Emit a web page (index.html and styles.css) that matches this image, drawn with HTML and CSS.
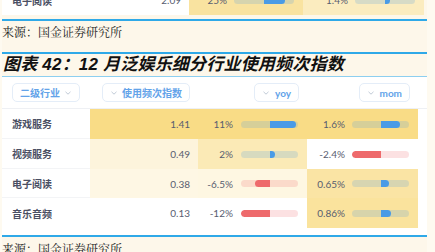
FILE: index.html
```html
<!DOCTYPE html>
<html lang="zh-CN">
<head>
<meta charset="utf-8">
<title>图表 42</title>
<link rel="stylesheet" href="styles.css">
</head>
<body>
<div class="page">
  <div class="prev">
    <div class="plabel">电子阅读</div>
    <div class="pvalue num">2.09</div>
    <div class="pbarcell pyoy">
      <span class="num">25%</span>
      <span class="bar wide"><span class="half neg"></span><span class="half pos"><i class="fill pos" style="width:21px"></i></span></span>
    </div>
    <div class="pbarcell pmom">
      <span class="num">1.4%</span>
      <span class="bar wide"><span class="half neg"></span><span class="half pos"><i class="fill pos" style="width:5px"></i></span></span>
    </div>
    <div class="pend"></div>
  </div>

  <div class="rule"></div>
  <p class="source">来源：国金证券研究所</p>
  <div class="rule"></div>
  <h2 class="title">图表 42：12 月泛娱乐细分行业使用频次指数</h2>
  <div class="rule thin"></div>

  <div class="table">
    <div class="cell head hlabel"><span class="btn">二级行业 <svg class="chev" viewBox="0 0 6 4"><polyline points="0.5,0.8 3,3.2 5.5,0.8"/></svg></span></div>
    <div class="cell head hvalue"><span class="btn"><svg class="chev" viewBox="0 0 6 4"><polyline points="0.5,0.8 3,3.2 5.5,0.8"/></svg> 使用频次指数</span></div>
    <div class="cell head hbar"><span class="btn"><svg class="chev" viewBox="0 0 6 4"><polyline points="0.5,0.8 3,3.2 5.5,0.8"/></svg> yoy</span></div>
    <div class="cell head hbar"><span class="btn"><svg class="chev" viewBox="0 0 6 4"><polyline points="0.5,0.8 3,3.2 5.5,0.8"/></svg> mom</span></div>
    <div class="cell head"></div>

    <div class="cell label">游戏服务</div>
    <div class="cell value num" style="background:#f9dc86">1.41</div>
    <div class="cell barcell" style="background:#f9dc86"><span class="num">11%</span><span class="bar"><span class="half neg"></span><span class="half pos"><i class="fill pos" style="width:26px"></i></span></span></div>
    <div class="cell barcell" style="background:#f9dc86"><span class="num">1.6%</span><span class="bar"><span class="half neg"></span><span class="half pos"><i class="fill pos" style="width:19px"></i></span></span></div>
    <div class="cell"></div>

    <div class="cell label">视频服务</div>
    <div class="cell value num" style="background:#fdf4dc">0.49</div>
    <div class="cell barcell" style="background:#fbeab6"><span class="num">2%</span><span class="bar"><span class="half neg"></span><span class="half pos"><i class="fill pos" style="width:5px"></i></span></span></div>
    <div class="cell barcell" style="background:#ffffff"><span class="num">-2.4%</span><span class="bar negbar"><span class="half neg"><i class="fill neg" style="width:28.5px"></i></span><span class="half pos"></span></span></div>
    <div class="cell"></div>

    <div class="cell label">电子阅读</div>
    <div class="cell value num" style="background:#fef7e4">0.38</div>
    <div class="cell barcell" style="background:#fef7e2"><span class="num">-6.5%</span><span class="bar negbar"><span class="half neg"><i class="fill neg" style="width:15px"></i></span><span class="half pos"></span></span></div>
    <div class="cell barcell" style="background:#fae4a4"><span class="num">0.65%</span><span class="bar"><span class="half neg"></span><span class="half pos"><i class="fill pos" style="width:8px"></i></span></span></div>
    <div class="cell"></div>

    <div class="cell label last">音乐音频</div>
    <div class="cell value num" style="background:#ffffff">0.13</div>
    <div class="cell barcell" style="background:#ffffff"><span class="num">-12%</span><span class="bar negbar"><span class="half neg"><i class="fill neg" style="width:28.5px"></i></span><span class="half pos"></span></span></div>
    <div class="cell barcell" style="background:#fae39d"><span class="num">0.86%</span><span class="bar"><span class="half neg"></span><span class="half pos"><i class="fill pos" style="width:10px"></i></span></span></div>
    <div class="cell"></div>
  </div>

  <div class="rule"></div>
  <p class="source foot">来源：国金证券研究所</p>
</div>
</body>
</html>
```

FILE: styles.css
```css
html, body {
  margin: 0;
  padding: 0;
  background: #fefaf0;
  overflow: hidden;
  width: 435px;
  height: 252px;
}

.page {
  margin-left: 2px;
  width: 425px;
  background: #fdf7ea;
  display: flex;
  flex-direction: column;
}

.num {
  font-family: "Lato", "Liberation Sans", sans-serif;
  font-size: 10px;
  color: #585d70;
}

/* previous table tail */
.prev {
  margin-top: -15px;
  height: 30px;
  display: grid;
  grid-template-columns: 88px 99px 114px 121px 3px;
  background: #ffffff;
  margin-bottom: 4px;
}
.plabel {
  padding-left: 10px;
  display: flex;
  align-items: center;
  font-family: "Lato", "Noto Sans CJK SC", sans-serif;
  font-weight: 700;
  font-size: 10px;
  color: #4a4f63;
}
.pvalue {
  display: flex;
  align-items: center;
  justify-content: flex-end;
  padding-right: 8px;
}
.pbarcell {
  display: flex;
  align-items: center;
  justify-content: flex-end;
  gap: 7px;
  padding-right: 9px;
}
.pyoy { background: #f9e3a0; }
.pmom { background: #fbecbf; }
.pend { background: #fdf7ea; }

/* rules */
.rule {
  height: 2px;
  background: #2fa9e8;
}
.rule.thin {
  height: 1px;
  background: #8dcff0;
}

.source {
  margin: 0;
  height: 31px;
  line-height: 21px;
  font-family: "Noto Serif CJK SC", "Noto Sans CJK SC", serif;
  font-size: 12px;
  color: #222222;
}
.source.foot {
  line-height: 21px;
  padding-top: 1px;
}

.title {
  margin: 0;
  height: 22px;
  line-height: 22px;
  padding-left: 1px;
  font-family: "Liberation Sans", "Noto Sans CJK SC", sans-serif;
  font-weight: 700;
  font-style: italic;
  font-size: 17px;
  color: #111111;
  letter-spacing: 0.2px;
}

/* table */
.table {
  background: #ffffff;
  display: grid;
  grid-template-columns: 88px 108px 109px 111px 9px;
  grid-template-rows: 32px 30px 30px 29px 30px;
  padding-bottom: 7px;
}

.cell {
  display: flex;
  align-items: center;
}
.head {
  border-bottom: 1px solid #eef0f4;
}
.hlabel { padding-left: 10px; }
.hvalue { justify-content: flex-end; padding-right: 8px; }
.hbar { justify-content: flex-end; padding-right: 8px; }

.btn {
  height: 19px;
  box-sizing: border-box;
  border: 1px solid #e4edf8;
  border-radius: 5px;
  background: #ffffff;
  display: inline-flex;
  align-items: center;
  gap: 5px;
  padding: 0 8px 0 7px;
  font-family: "Lato", "Noto Sans CJK SC", sans-serif;
  font-weight: 700;
  font-size: 10px;
  color: #63a3e9;
}
.hvalue .btn { padding: 0 7px 0 8px; }
.hbar .btn { padding: 0 7px 0 8px; gap: 6px; }

.chev {
  width: 6px;
  height: 4px;
  fill: none;
  stroke: #b9c4d3;
  stroke-width: 0.9;
}

.label {
  padding-left: 10px;
  font-family: "Lato", "Noto Sans CJK SC", sans-serif;
  font-weight: 700;
  font-size: 10px;
  color: #4a4f63;
  border-bottom: 1px solid #f3f4f6;
}
.label.last { border-bottom: none; }

.value {
  justify-content: flex-end;
  padding-right: 8px;
}

.barcell {
  justify-content: flex-end;
  gap: 8px;
  padding-right: 9px;
}
.barcell:nth-child(5n+4) { gap: 7px; }

/* diverging bars */
.bar {
  width: 57px;
  height: 7px;
  border-radius: 3.5px;
  display: flex;
  overflow: hidden;
  background: rgba(74, 154, 230, 0.2);
}
.bar.wide { width: 60px; }
.bar.negbar { background: rgba(238, 106, 108, 0.2); }
.half {
  flex: 1;
  display: flex;
}
.half.neg { justify-content: flex-end; }
.half.pos { justify-content: flex-start; }
.fill {
  display: block;
  height: 100%;
}
.fill.pos {
  background: #4a9be6;
  border-radius: 0 3.5px 3.5px 0;
}
.fill.neg {
  background: #ee6a6c;
  border-radius: 3.5px 0 0 3.5px;
}
```
